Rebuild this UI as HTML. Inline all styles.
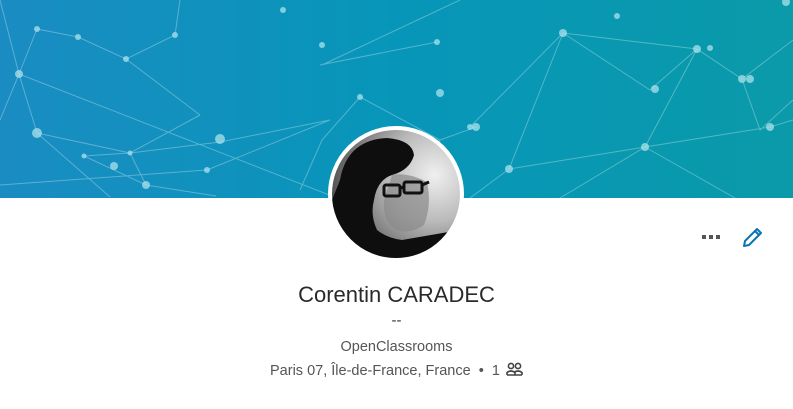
<!DOCTYPE html>
<html><head><meta charset="utf-8"><style>
html,body{margin:0;padding:0;width:793px;height:409px;overflow:hidden;background:#fff;font-family:"Liberation Sans",sans-serif}
.banner{position:absolute;left:0;top:0;width:793px;height:198px;background:linear-gradient(90deg,#1a8cc2 0%,#0796b9 50%,#0a9aa9 100%)}
.av{position:absolute;left:328px;top:126px;width:128px;height:128px;border:4px solid #fff;border-radius:50%;overflow:hidden;background:radial-gradient(circle at 80% 35%,#f0f0f0 0%,#bbb 35%,#666 70%,#222 100%)}
.t{position:absolute;left:0;width:793px;text-align:center;color:#000}
</style></head><body>
<div class="banner">
<svg width="793" height="198" style="position:absolute;left:0;top:0">
<g stroke="rgba(255,255,255,0.3)" stroke-width="1" fill="none">
<path d="M19 74L337 198M19 74L37 133L110 197M37 29L78 37L126 59L175 35M126 59L200 115M37 29L19 74L0 120M19 74L0 0M84 156L130 153L200 115M84 156L146 185M130 153L220 142L330 120M37 133L130 153L146 185L216 196M476 127L440 140L420 198M440 140L360 97L322 140L300 190M470 127L563 33L650 90L697 49M563 33L509 169L470 198M509 169L645 147L770 127L793 120M645 147L697 49L742 79L793 40M645 147L560 198M645 147L735 198M742 79L760 130L793 100M563 33L697 49M320 65L437 42M460 0L322 65M175 35L180 0M207 170L330 120M0 185L207 170"/>
</g>
<g fill="rgba(170,225,235,0.75)">
<circle cx="19" cy="74" r="4"/><circle cx="37" cy="133" r="5"/><circle cx="37" cy="29" r="3"/><circle cx="78" cy="37" r="3"/><circle cx="126" cy="59" r="3"/><circle cx="175" cy="35" r="3"/><circle cx="130" cy="153" r="2.5"/><circle cx="84" cy="156" r="2.5"/><circle cx="146" cy="185" r="4"/><circle cx="114" cy="166" r="4"/><circle cx="220" cy="139" r="5"/><circle cx="207" cy="170" r="3"/><circle cx="476" cy="127" r="4"/><circle cx="440" cy="93" r="4"/><circle cx="470" cy="127" r="3"/><circle cx="563" cy="33" r="4"/><circle cx="509" cy="169" r="4"/><circle cx="645" cy="147" r="4"/><circle cx="655" cy="89" r="4"/><circle cx="697" cy="49" r="4"/><circle cx="742" cy="79" r="4"/><circle cx="750" cy="79" r="4"/><circle cx="770" cy="127" r="4"/><circle cx="710" cy="48" r="3"/><circle cx="786" cy="2" r="4"/><circle cx="322" cy="45" r="3"/><circle cx="437" cy="42" r="3"/><circle cx="360" cy="97" r="3"/><circle cx="617" cy="16" r="3"/><circle cx="283" cy="10" r="3"/>
</g></svg>
</div>
<div class="av">
<svg width="128" height="128">
<path d="M8 50 Q15 10 55 8 Q80 10 82 25 Q78 40 60 45 Q45 50 42 70 Q38 85 45 100 Q55 108 70 110 L128 100 L128 128 L0 128 L0 70Z" fill="#0e0e0e"/>
<path d="M60 45 Q75 42 95 52 Q100 75 92 95 Q78 105 65 100 Q50 92 52 70 Z" fill="#8a8a8a" opacity="0.7"/>
<rect x="52" y="55" width="16" height="11" rx="2" fill="none" stroke="#111" stroke-width="3"/>
<rect x="72" y="52" width="18" height="11" rx="2" fill="none" stroke="#111" stroke-width="3"/>
<path d="M68 58 L72 57 M90 55 L97 52" stroke="#111" stroke-width="3"/>
</svg>
</div>
<svg style="position:absolute;left:700px;top:234px" width="24" height="8"><rect x="2" y="1" width="4" height="4" fill="#555"/><rect x="9" y="1" width="4" height="4" fill="#555"/><rect x="16" y="1" width="4" height="4" fill="#555"/></svg>
<svg style="position:absolute;left:740px;top:226px" width="24" height="24" viewBox="0 0 24 24"><path d="M4 20 L5 15 L17 3 L21 7 L9 19 Z M15 5 L19 9" fill="none" stroke="#0a73b7" stroke-width="2" stroke-linejoin="round"/></svg>
<div class="t" style="top:282px;font-size:22px;color:#2a2a2a">Corentin CARADEC</div>
<div class="t" style="top:312px;font-size:15px;color:#333">--</div>
<div class="t" style="top:339px;font-size:14.5px;color:#555">OpenClassrooms</div>
<div class="t" style="top:362px;font-size:14.5px;color:#555">Paris 07, Île-de-France, France &nbsp;•&nbsp; 1 <svg style="vertical-align:-1px;margin-left:2px" width="17" height="14" viewBox="0 0 17 14"><g fill="none" stroke="#444" stroke-width="1.6"><circle cx="5" cy="4" r="2.6"/><circle cx="12" cy="4" r="2.6"/><path d="M1 13 V10.5 Q5 7.5 9 10.5 V13 M8 10.5 Q12 7.5 16 10.5 V13 M1 13H16"/></g></svg></div>
</body></html>
